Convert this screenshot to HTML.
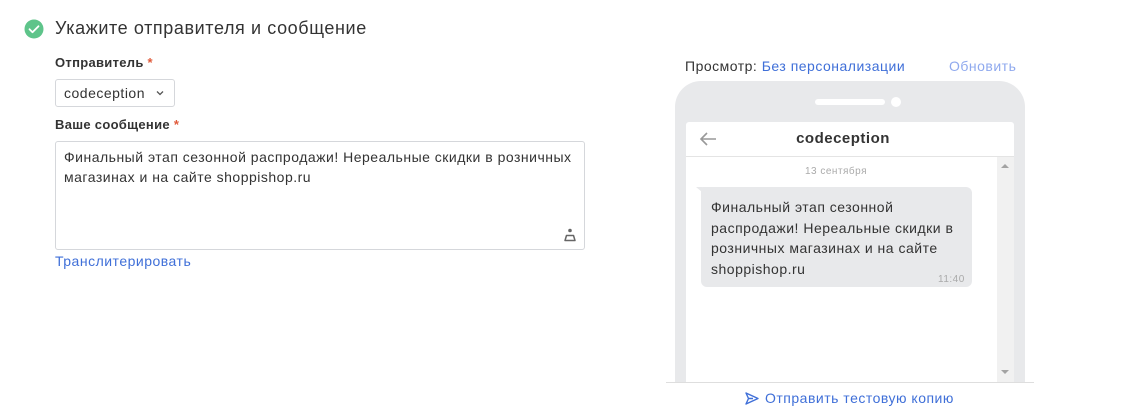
<!DOCTYPE html>
<html><head><meta charset="utf-8"><style>
body{margin:0;width:1126px;height:420px;background:#fff;font-family:"Liberation Sans","DejaVu Sans",sans-serif;position:relative;overflow:hidden;color:#333;letter-spacing:0.5px}
.a{position:absolute;white-space:nowrap}
</style></head><body>
<svg class="a" style="left:24px;top:19px" width="20" height="20"><circle cx="10" cy="10" r="9.5" fill="#5ec48a"/><path d="M5.5 10.2l3 3 6-6" stroke="#fff" stroke-width="1.8" fill="none" stroke-linecap="round" stroke-linejoin="round"/></svg>
<div class="a" style="left:55px;top:18px;font-size:18px;color:#333;letter-spacing:0.6px">Укажите отправителя и сообщение</div>
<div class="a" style="left:55px;top:55px;font-size:13px;font-weight:bold;color:#333;letter-spacing:0.3px">Отправитель <span style="color:#e05a3a">*</span></div>
<div class="a" style="left:55px;top:79px;width:118px;height:26px;border:1px solid #d5d7db;border-radius:3px"></div>
<div class="a" style="left:64px;top:85px;font-size:14px;color:#333">codeception</div>
<svg class="a" style="left:155px;top:89px" width="10" height="8"><path d="M2 2.5l3 3 3-3" stroke="#555" stroke-width="1.3" fill="none"/></svg>
<div class="a" style="left:55px;top:117px;font-size:13px;font-weight:bold;color:#333;letter-spacing:0.3px">Ваше сообщение <span style="color:#e05a3a">*</span></div>
<div class="a" style="left:55px;top:141px;width:528px;height:107px;border:1px solid #d5d7db;border-radius:3px"></div>
<div class="a" style="left:64px;top:147px;font-size:14px;line-height:20px;color:#333">Финальный этап сезонной распродажи! Нереальные скидки в розничных<br>магазинах и на сайте shoppishop.ru</div>
<svg class="a" style="left:563px;top:228px" width="14" height="14"><circle cx="7" cy="2.5" r="1.8" fill="#666"/><path d="M2 12.5h10l-1.5-5h-7z" stroke="#666" stroke-width="1.5" fill="none" stroke-linejoin="round"/></svg>
<div class="a" style="left:55px;top:253px;font-size:14px;color:#3f6fd8">Транслитерировать</div>

<div class="a" style="left:685px;top:58px;font-size:14px;color:#333">Просмотр: <span style="color:#3f6fd8">Без персонализации</span></div>
<div class="a" style="left:949px;top:58px;font-size:14px;color:#8fa9ee">Обновить</div>
<div class="a" style="left:675px;top:81px;width:350px;height:301px;background:#e8e9eb;border-radius:26px 26px 0 0"></div>
<div class="a" style="left:815px;top:99px;width:70px;height:6px;background:#fff;border-radius:3px"></div>
<div class="a" style="left:891px;top:97px;width:10px;height:10px;background:#fff;border-radius:50%"></div>
<div class="a" style="left:686px;top:122px;width:328px;height:260px;background:#fff;border-radius:3px 3px 0 0"></div>
<div class="a" style="left:686px;top:156px;width:328px;height:1px;background:#e4e4e4"></div>
<svg class="a" style="left:698px;top:130px" width="20" height="18"><path d="M18 9H3M9 3L3 9l6 6" stroke="#999" stroke-width="1.6" fill="none"/></svg>
<div class="a" style="left:686px;top:130px;width:314px;text-align:center;font-size:15px;font-weight:bold;color:#333">codeception</div>
<div class="a" style="left:997px;top:157px;width:17px;height:225px;background:#f1f1f1"></div>
<svg class="a" style="left:1000px;top:161px" width="10" height="216"><path d="M1 7l4-4 4 4z" fill="#a3a3a3"/><path d="M1 209l4 4 4-4z" fill="#a3a3a3"/></svg>
<div class="a" style="left:686px;top:166px;width:300px;text-align:center;font-size:10px;color:#aaa">13 сентября</div>
<div class="a" style="left:701px;top:187px;width:271px;height:100px;background:#e8e9eb;border-radius:2px 6px 6px 6px"></div>
<div class="a" style="left:696px;top:187px;width:0;height:0;border-top:5px solid #e8e9eb;border-left:6px solid transparent"></div>
<div class="a" style="left:711px;top:197px;font-size:14px;line-height:20.5px;color:#333">Финальный этап сезонной<br>распродажи! Нереальные скидки в<br>розничных магазинах и на сайте<br>shoppishop.ru</div>
<div class="a" style="left:938px;top:274px;font-size:10px;color:#aaa">11:40</div>
<div class="a" style="left:666px;top:382px;width:368px;height:1px;background:#dedede"></div>
<svg class="a" style="left:744px;top:391px" width="16" height="15"><path d="M2 2l12 5.5L2 13l2.5-5.5zM4.5 7.5H9" stroke="#3f6fd8" stroke-width="1.4" fill="none" stroke-linejoin="round"/></svg>
<div class="a" style="left:765px;top:390px;font-size:14px;color:#3f6fd8">Отправить тестовую копию</div>
</body></html>
